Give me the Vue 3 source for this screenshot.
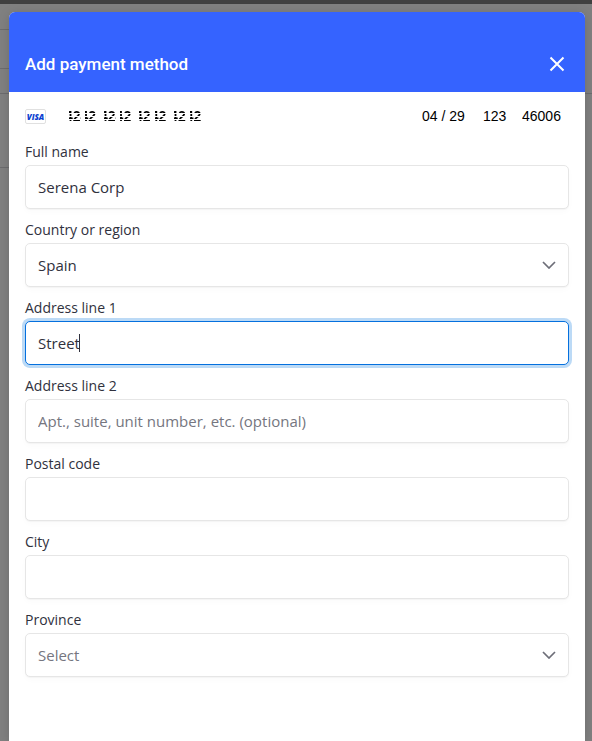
<script setup>
import { onMounted, reactive, ref } from "vue";

const fields = [
  { id: "name", label: "Full name" },
  { id: "country", label: "Country or region", options: ["Spain", "France", "Portugal"] },
  { id: "line1", label: "Address line 1" },
  { id: "line2", label: "Address line 2", placeholder: "Apt., suite, unit number, etc. (optional)" },
  { id: "postal", label: "Postal code" },
  { id: "city", label: "City" },
  { id: "province", label: "Province", options: ["Barcelona", "Madrid", "Valencia"], empty: "Select" },
];

const form = reactive({
  name: "Serena Corp",
  country: "Spain",
  line1: "Street",
  line2: "",
  postal: "",
  city: "",
  province: "",
});

const card = reactive({ number: "4242 4242 4242 4242", expiry: "04 / 29", cvc: "123", zip: "46006" });

const formEl = ref(null);

onMounted(() => {
  const input = formEl.value.querySelector("#line1");
  input.focus();
  input.setSelectionRange(form.line1.length, form.line1.length);
});
</script>

<template>
  <div class="page">
    <div class="topbar"></div>
    <div class="backdrop">
      <div class="line line-1"></div>
      <div class="line line-2"></div>
      <div class="line line-3"></div>
      <div class="line line-4"></div>
    </div>
    <section class="modal" role="dialog" aria-labelledby="title">
      <header class="modal-header">
        <h1 id="title">Add payment method</h1>
        <button class="close" type="button" aria-label="Close">
          <svg width="16" height="16" viewBox="0 0 16 16">
            <path d="M1.5 1.5 L14.5 14.5 M14.5 1.5 L1.5 14.5" stroke="currentColor" stroke-width="2" />
          </svg>
        </button>
      </header>
      <form ref="formEl" class="modal-body" @submit.prevent>
        <div class="card-row">
          <span class="brand">VISA</span>
          <input v-model="card.number" class="number" aria-label="Card number" />
          <input v-model="card.expiry" class="expiry" aria-label="Expiry" />
          <input v-model="card.cvc" class="cvc" aria-label="CVC" />
          <input v-model="card.zip" class="zip" aria-label="ZIP" />
        </div>
        <div v-for="field in fields" :key="field.id" class="field">
          <label :for="field.id">{{ field.label }}</label>
          <div class="control-wrap">
            <select
              v-if="field.options"
              :id="field.id"
              v-model="form[field.id]"
              class="control"
              :class="{ unset: !form[field.id] }"
            >
              <option v-if="field.empty" value="">{{ field.empty }}</option>
              <option v-for="option in field.options" :key="option">{{ option }}</option>
            </select>
            <input v-else :id="field.id" v-model="form[field.id]" class="control" :placeholder="field.placeholder" />
            <svg v-if="field.options" class="chevron" width="14" height="8" viewBox="0 0 14 8">
              <path d="M1 1 L7 7 L13 1" stroke="currentColor" stroke-width="1.7" fill="none" />
            </svg>
            <span v-if="field.id === 'line1'" class="caret"></span>
          </div>
        </div>
      </form>
    </section>
  </div>
</template>

<style>
body {
  background: #808080;
}
</style>

<style scoped>
.page {
  position: relative;
  display: flex;
  flex-direction: column;
  min-height: 100vh;
  box-sizing: border-box;
  padding: 12px 7px 0 9px;
  overflow: hidden;
}

.topbar {
  position: absolute;
  top: 0;
  left: 0;
  right: 0;
  height: 4px;
  background: #404040;
}

.backdrop {
  position: absolute;
  inset: 4px 0 0;
}

.line {
  position: absolute;
  left: 0;
  width: 9px;
  height: 1px;
  background: #6c6c6e;
}

.line-1 {
  top: 25px;
}

.line-2 {
  top: 64px;
}

.line-3 {
  top: 89px;
  width: 100%;
}

.line-4 {
  top: 163px;
}

.modal {
  position: relative;
  flex: 1;
  background: #fff;
  border-radius: 6px 6px 0 0;
  box-shadow: 0 2px 12px rgba(0, 0, 0, 0.15);
}

.modal-header {
  display: flex;
  justify-content: space-between;
  align-items: center;
  height: 80px;
  box-sizing: border-box;
  padding: 24px 20px 0 16px;
  background: #3563ff;
  color: #fff;
  border-radius: 6px 6px 0 0;
}

h1 {
  margin: 0;
  font: 500 17px/24px Roboto, sans-serif;
}

.close {
  display: flex;
  padding: 0;
  border: none;
  background: none;
  color: #fff;
  cursor: pointer;
}

.modal-body {
  padding: 14px 16px 0;
}

.card-row {
  display: flex;
  align-items: center;
  height: 20px;
  margin-bottom: 16px;
}

.card-row input {
  box-sizing: border-box;
  height: 18px;
  padding: 0;
  border: none;
  outline: none;
  background: none;
  color: #000;
  font: 14px/18px "Liberation Sans", Arial, sans-serif;
}

.brand {
  width: 19px;
  height: 13px;
  margin-right: 19px;
  border: 1px solid #e0e0e0;
  border-radius: 2px;
  color: #0a3fd0;
  font: italic 800 8px/13px "Open Sans", sans-serif;
  text-align: center;
}

/* card digits are obscured: left half of each 4 and every third row are cut */
.card-row .number {
  flex: 1;
  min-width: 0;
  font-weight: 700;
  mask-image:
    repeating-linear-gradient(transparent 0 1px, #000 1px 3px),
    repeating-linear-gradient(90deg, transparent 0 4px, #000 4px 16px, transparent 16px 20px, #000 20px 35px);
  mask-composite: intersect;
}

.expiry {
  width: 61px;
}

.cvc {
  width: 39px;
}

.zip {
  width: 47px;
}

.field {
  margin-bottom: 11px;
}

label {
  display: block;
  margin-bottom: 3px;
  color: #30313d;
  font: 14px/20px "Open Sans", "Noto Sans", sans-serif;
}

.control-wrap {
  position: relative;
}

.control {
  display: block;
  box-sizing: border-box;
  width: 100%;
  height: 44px;
  padding: 0 12px;
  border: 1px solid #e6e6e6;
  border-radius: 5px;
  outline: none;
  background: #fff;
  color: #30313d;
  box-shadow: 0 1px 1px rgba(0, 0, 0, 0.03), 0 3px 6px rgba(0, 0, 0, 0.02);
  font: 15px/20px "Open Sans", "Noto Sans", sans-serif;
  appearance: none;
}

.control::placeholder,
.control.unset {
  color: #757680;
}

.control:focus {
  border-color: #0570de;
  box-shadow: 0 0 0 3px #bcdaf6, 0 1px 1px rgba(0, 0, 0, 0.03);
  caret-color: transparent;
}

.caret {
  position: absolute;
  top: 13px;
  left: 54px;
  width: 1px;
  height: 18px;
  background: #30313d;
}

.chevron {
  position: absolute;
  top: 18px;
  right: 13px;
  color: #6d6e78;
  pointer-events: none;
}
</style>
